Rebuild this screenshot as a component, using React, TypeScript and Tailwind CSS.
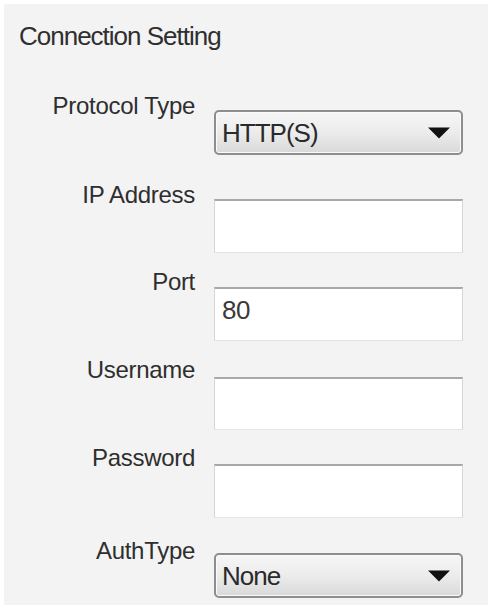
import React from "react";

const font = { fontFamily: '"Liberation Sans", Arial, sans-serif' };

function Arrow() {
  return (
    <svg width="22" height="12" viewBox="0 0 22 12" className="shrink-0">
      <path d="M0 0.5 L22 0.5 L11 11.5 Z" fill="#111" />
    </svg>
  );
}

function Dropdown({ value, mt }: { value: string; mt: string }) {
  return (
    <div
      className={`${mt} flex h-[45px] w-[249px] items-center justify-between rounded-[5px] border-2 border-[#8e8e8e] bg-gradient-to-b from-[#f6f6f6] via-[#ececec] to-[#d9d9d9] pl-[6px] pr-[11px] shadow-[inset_0_0_0_1px_#fafafa]`}
    >
      <span className="text-[26px] leading-[26px] tracking-[-1px] text-[#2a2a2a]">{value}</span>
      <Arrow />
    </div>
  );
}

function TextBox({ value, mt, h }: { value?: string; mt: string; h: string }) {
  return (
    <div
      className={`${mt} ${h} flex w-[249px] items-start border-x border-b border-t-2 border-x-[#d6d6d6] border-b-[#e4e4e4] border-t-[#a8a8a8] bg-white pl-[7px] pt-[8px]`}
    >
      {value ? (
        <span className="text-[26px] leading-[26px] tracking-[-0.5px] text-[#3a3a3a]">{value}</span>
      ) : null}
    </div>
  );
}

function Label({ children }: { children: React.ReactNode }) {
  return (
    <div className="w-[191px] shrink-0 text-right text-[24px] leading-[24px] tracking-[-0.3px] text-[#2e2e2e]">
      {children}
    </div>
  );
}

export default function App() {
  return (
    <div className="h-[606px] w-[490px] bg-white pb-[1px] pl-[4px] pr-[2px] pt-[4px]" style={font}>
      <div className="flex h-full w-full flex-col bg-[#f3f3f3] pl-[15px] pt-[19px]">
        <div className="text-[26px] leading-[26px] tracking-[-1px] text-[#2f2f2f]">Connection Setting</div>

        <div className="flex flex-col pl-0">
          <div className="-ml-[15px] mt-[45px] flex items-start gap-[19px]">
            <Label>Protocol Type</Label>
            <Dropdown value="HTTP(S)" mt="mt-[16px]" />
          </div>

          <div className="-ml-[15px] mt-[28px] flex items-start gap-[19px]">
            <Label>IP Address</Label>
            <TextBox mt="mt-[16px]" h="h-[54px]" />
          </div>

          <div className="-ml-[15px] mt-[17px] flex items-start gap-[19px]">
            <Label>Port</Label>
            <TextBox value="80" mt="mt-[17px]" h="h-[54px]" />
          </div>

          <div className="-ml-[15px] mt-[17px] flex items-start gap-[19px]">
            <Label>Username</Label>
            <TextBox mt="mt-[19px]" h="h-[53px]" />
          </div>

          <div className="-ml-[15px] mt-[16px] flex items-start gap-[19px]">
            <Label>Password</Label>
            <TextBox mt="mt-[18px]" h="h-[54px]" />
          </div>

          <div className="-ml-[15px] mt-[21px] flex items-start gap-[19px]">
            <Label>AuthType</Label>
            <Dropdown value="None" mt="mt-[14px]" />
          </div>
        </div>
      </div>
    </div>
  );
}
